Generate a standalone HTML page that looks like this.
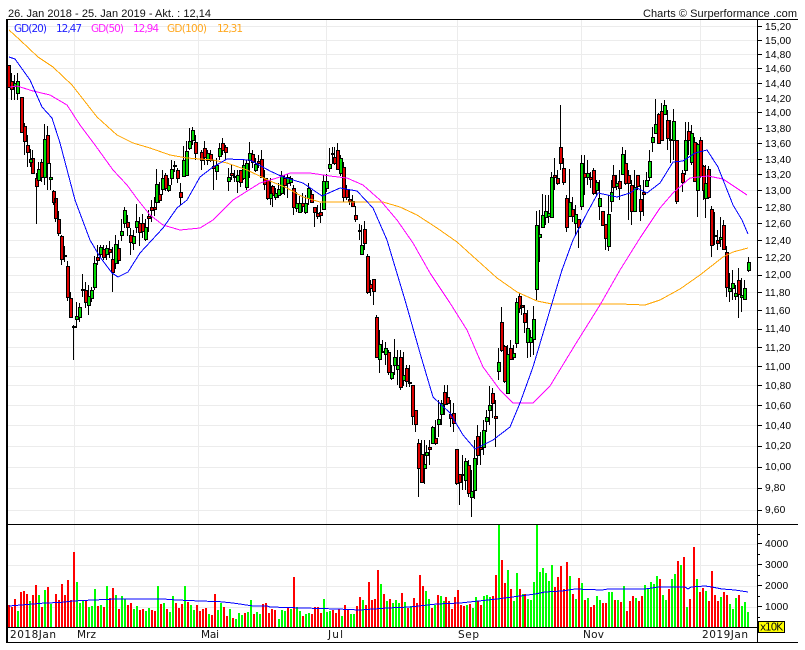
<!DOCTYPE html>
<html><head><meta charset="utf-8"><style>
html,body{margin:0;padding:0;background:#fff;width:805px;height:650px;overflow:hidden}
svg{display:block}
text{font-family:"Liberation Sans",sans-serif;font-size:11px;fill:#111}
.y text{font-size:10.2px;letter-spacing:.15px;fill:#000}
.m text,text.m{font-family:"DejaVu Sans",sans-serif;font-size:10.5px}
</style></head><body>
<svg width="805" height="650" viewBox="0 0 805 650" xmlns="http://www.w3.org/2000/svg">
<rect width="805" height="650" fill="#fff"/>
<!-- grid -->
<path fill="none" stroke="#ececec" stroke-width="1" d="M8 40.5H757M8 54.5H757M8 68.5H757M8 83.5H757M8 98.5H757M8 112.5H757M8 128.5H757M8 143.5H757M8 159.5H757M8 174.5H757M8 190.5H757M8 207.5H757M8 223.5H757M8 240.5H757M8 257.5H757M8 275.5H757M8 292.5H757M8 310.5H757M8 329.5H757M8 347.5H757M8 366.5H757M8 385.5H757M8 405.5H757M8 425.5H757M8 446.5H757M8 467.5H757M8 488.5H757M8 510.5H757M8 26.5H757
M8 544.5H757M8 565.5H757M8 586.5H757M8 607.5H757
M74.5 20V627M198.5 20V627M326.5 20V627M457.5 20V627M581.5 20V627M700.5 20V627"/>
<!-- wicks -->
<path fill="none" stroke="#000" stroke-width="1" d="M8.5 65V88M11.5 73V100M14.5 75V100M17.5 73V100M21.5 97V132M24.5 123V155M27.5 135V167M30.5 149V167M32.5 150V174M36.5 173V224M38.5 162V182M41.5 159V182M44.5 124V185M47.5 126V190M50.5 163V190M53.5 190V205M55.5 198V222M58.5 211V236M61.5 235V265M64.5 246V262M67.5 261V301M70.5 292V318M73.5 325V360M76.5 302V328M79.5 303V322M82.5 274V297M85.5 282V308M88.5 285V315M91.5 287V302M94.5 256V290M97.5 245V265M100.5 245V258M103.5 245V260M106.5 245V260M109.5 241V258M112.5 247V292M115.5 235V269M118.5 240V264M121.5 219V241M124.5 207V228M127.5 215V236M130.5 228V255M133.5 230V250M136.5 204V233M139.5 217V246M142.5 214V238M145.5 219V241M148.5 210V232M151.5 200V222M154.5 197V216M156.5 169V207M159.5 182V203M162.5 170V195M165.5 173V191M168.5 178V192M171.5 160V185M174.5 161V172M177.5 168V183M180.5 183V205M183.5 146V176M186.5 141V175M189.5 128V150M192.5 127V145M195.5 135V160M201.5 150V170M204.5 141V165M207.5 150V165M210.5 150V162M213.5 160V190M216.5 158V180M219.5 143V160M222.5 138V155M225.5 145V160M228.5 168V191M231.5 165V180M234.5 170V182M237.5 170V193M240.5 170V187M243.5 160V180M246.5 160V190M249.5 142V178M252.5 150V168M255.5 158V172M258.5 155V168M261.5 150V178M264.5 170V190M267.5 178V200M270.5 178V205M272.5 185V207M275.5 188V200M278.5 183V198M281.5 171V195M284.5 175V195M287.5 174V198M290.5 176V186M293.5 185V215M296.5 192V212M299.5 196V213M302.5 193V212M305.5 195V214M308.5 183V205M311.5 190V203M314.5 207V227M317.5 205V219M320.5 203V223M323.5 175V209M326.5 174V192M329.5 148V172M332.5 147V164M334.5 147V165M337.5 143V169M340.5 155V176M343.5 162V202M346.5 185V200M349.5 190V205M352.5 195V207M355.5 206V222M359.5 224V240M361.5 225V254M364.5 221V250M367.5 254V294M370.5 280V296M373.5 279V305M376.5 315V358M379.5 330V373M382.5 340V353M385.5 342V365M388.5 350V375M391.5 365V380M394.5 339V375M397.5 350V385M400.5 350V390M403.5 352V386M406.5 365V387M409.5 365V387M412.5 385V425M415.5 410V432M418.5 439V497M421.5 440V482M424.5 440V484M426.5 445V464M429.5 440V465M432.5 426V444M435.5 420V445M438.5 400V437M441.5 400V425M444.5 385V415M447.5 385V405M450.5 400V427M453.5 403V432M456.5 449V485M459.5 475V505M462.5 455V490M465.5 458V490M468.5 460V497M471.5 470V517M474.5 440V499M477.5 425V465M480.5 432V465M483.5 420V455M486.5 410V432M489.5 386V425M492.5 388V418M495.5 400V447M498.5 348V380M501.5 307V352M504.5 345V383M507.5 345V393M510.5 340V360M513.5 345V360M516.5 298V348M519.5 293V313M521.5 300V315M524.5 305V333M527.5 310V358M530.5 330V357M533.5 306V355M536.5 211V300M539.5 210V262M542.5 194V227M545.5 195V225M548.5 195V223M551.5 172V217M554.5 158V190M557.5 170V185M560.5 105V170M563.5 158V185M566.5 195V232M569.5 169V217M572.5 197V222M575.5 205V235M578.5 220V248M581.5 155V210M584.5 155V195M587.5 160V185M590.5 172V188M593.5 168V195M596.5 180V195M599.5 180V220M602.5 211V225M605.5 224V250M608.5 195V251M611.5 180V212M613.5 165V195M616.5 175V190M619.5 170V200M622.5 147V175M625.5 150V185M628.5 170V220M631.5 180V225M634.5 170V212M637.5 175V190M640.5 185V221M643.5 180V216M646.5 172V187M649.5 150V181M652.5 127V152M655.5 99V133M658.5 113V143M661.5 103V140M664.5 100V114M667.5 110V150M670.5 120V163M673.5 109V160M676.5 140V204M682.5 170V192M685.5 122V175M688.5 122V155M691.5 125V165M694.5 137V182M697.5 143V217M700.5 137V178M703.5 165V200M705.5 165V218M708.5 166V199M711.5 206V257M714.5 212V245M717.5 230V250M720.5 217V247M723.5 220V250M726.5 246V297M729.5 273V302M732.5 270V300M735.5 285V300M738.5 268V318M741.5 278V312M744.5 280V300M748.5 257V272"/>
<!-- red bodies -->
<path fill="#dd0000" stroke="#000" stroke-width="1" d="M7.5 65.5h3V87.5h-3zM10.5 81.5h3V89.5h-3zM20.5 97.5h3V132.5h-3zM23.5 126.5h3V141.5h-3zM26.5 145.5h3V152.5h-3zM31.5 158.5h3V173.5h-3zM35.5 178.5h3V186.5h-3zM40.5 162.5h3V177.5h-3zM46.5 135.5h3V163.5h-3zM52.5 191.5h3V202.5h-3zM54.5 198.5h3V218.5h-3zM57.5 219.5h3V233.5h-3zM60.5 236.5h3V259.5h-3zM63.5 255.5h3V256.5h-3zM66.5 266.5h3V297.5h-3zM69.5 298.5h3V317.5h-3zM72.5 326.5h3V327.5h-3zM81.5 289.5h3V290.5h-3zM84.5 290.5h3V302.5h-3zM96.5 257.5h3V260.5h-3zM102.5 249.5h3V257.5h-3zM108.5 249.5h3V252.5h-3zM111.5 259.5h3V272.5h-3zM117.5 248.5h3V260.5h-3zM126.5 222.5h3V227.5h-3zM129.5 235.5h3V242.5h-3zM138.5 223.5h3V232.5h-3zM141.5 223.5h3V231.5h-3zM147.5 216.5h3V218.5h-3zM150.5 207.5h3V210.5h-3zM153.5 207.5h3V209.5h-3zM158.5 194.5h3V200.5h-3zM164.5 175.5h3V188.5h-3zM173.5 165.5h3V166.5h-3zM176.5 170.5h3V178.5h-3zM179.5 192.5h3V197.5h-3zM194.5 142.5h3V153.5h-3zM200.5 152.5h3V160.5h-3zM203.5 148.5h3V157.5h-3zM209.5 154.5h3V160.5h-3zM212.5 166.5h3V168.5h-3zM221.5 143.5h3V150.5h-3zM224.5 147.5h3V152.5h-3zM230.5 173.5h3V175.5h-3zM233.5 176.5h3V177.5h-3zM239.5 170.5h3V182.5h-3zM251.5 154.5h3V162.5h-3zM257.5 161.5h3V163.5h-3zM260.5 159.5h3V177.5h-3zM263.5 178.5h3V184.5h-3zM266.5 180.5h3V198.5h-3zM271.5 186.5h3V195.5h-3zM283.5 178.5h3V185.5h-3zM292.5 188.5h3V207.5h-3zM301.5 203.5h3V206.5h-3zM310.5 194.5h3V202.5h-3zM313.5 207.5h3V212.5h-3zM316.5 213.5h3V216.5h-3zM319.5 212.5h3V215.5h-3zM331.5 153.5h3V154.5h-3zM333.5 157.5h3V163.5h-3zM336.5 150.5h3V169.5h-3zM342.5 167.5h3V197.5h-3zM345.5 189.5h3V197.5h-3zM348.5 199.5h3V201.5h-3zM351.5 201.5h3V206.5h-3zM354.5 215.5h3V219.5h-3zM358.5 230.5h3V231.5h-3zM363.5 229.5h3V243.5h-3zM366.5 256.5h3V292.5h-3zM369.5 284.5h3V288.5h-3zM372.5 279.5h3V291.5h-3zM375.5 317.5h3V357.5h-3zM381.5 351.5h3V352.5h-3zM387.5 352.5h3V372.5h-3zM399.5 357.5h3V387.5h-3zM405.5 368.5h3V381.5h-3zM408.5 382.5h3V383.5h-3zM411.5 385.5h3V416.5h-3zM414.5 410.5h3V424.5h-3zM417.5 443.5h3V468.5h-3zM420.5 454.5h3V482.5h-3zM428.5 447.5h3V449.5h-3zM434.5 438.5h3V443.5h-3zM443.5 392.5h3V404.5h-3zM446.5 397.5h3V403.5h-3zM449.5 414.5h3V418.5h-3zM452.5 413.5h3V423.5h-3zM455.5 449.5h3V483.5h-3zM458.5 474.5h3V482.5h-3zM461.5 474.5h3V475.5h-3zM467.5 465.5h3V493.5h-3zM476.5 436.5h3V455.5h-3zM479.5 447.5h3V449.5h-3zM491.5 393.5h3V403.5h-3zM494.5 416.5h3V418.5h-3zM500.5 322.5h3V350.5h-3zM503.5 346.5h3V381.5h-3zM509.5 348.5h3V359.5h-3zM518.5 296.5h3V308.5h-3zM520.5 305.5h3V307.5h-3zM523.5 313.5h3V322.5h-3zM553.5 175.5h3V177.5h-3zM556.5 178.5h3V183.5h-3zM559.5 147.5h3V163.5h-3zM562.5 168.5h3V182.5h-3zM565.5 198.5h3V227.5h-3zM571.5 209.5h3V216.5h-3zM577.5 219.5h3V227.5h-3zM583.5 173.5h3V177.5h-3zM589.5 177.5h3V179.5h-3zM592.5 170.5h3V193.5h-3zM601.5 211.5h3V225.5h-3zM604.5 224.5h3V238.5h-3zM612.5 175.5h3V187.5h-3zM618.5 181.5h3V188.5h-3zM624.5 163.5h3V183.5h-3zM627.5 175.5h3V183.5h-3zM630.5 185.5h3V211.5h-3zM636.5 175.5h3V186.5h-3zM639.5 199.5h3V211.5h-3zM642.5 192.5h3V194.5h-3zM657.5 114.5h3V143.5h-3zM660.5 111.5h3V140.5h-3zM666.5 120.5h3V138.5h-3zM669.5 139.5h3V140.5h-3zM675.5 140.5h3V201.5h-3zM681.5 173.5h3V182.5h-3zM687.5 131.5h3V140.5h-3zM693.5 142.5h3V181.5h-3zM699.5 140.5h3V176.5h-3zM702.5 166.5h3V190.5h-3zM707.5 169.5h3V197.5h-3zM710.5 209.5h3V245.5h-3zM713.5 235.5h3V236.5h-3zM716.5 240.5h3V243.5h-3zM722.5 225.5h3V249.5h-3zM725.5 252.5h3V287.5h-3zM737.5 280.5h3V294.5h-3z"/>
<!-- green bodies -->
<path fill="#00d800" stroke="#000" stroke-width="1" d="M13.5 83.5h3V86.5h-3zM16.5 81.5h3V93.5h-3zM29.5 159.5h3V162.5h-3zM37.5 169.5h3V180.5h-3zM43.5 139.5h3V177.5h-3zM49.5 177.5h3V179.5h-3zM75.5 316.5h3V319.5h-3zM78.5 307.5h3V317.5h-3zM87.5 296.5h3V305.5h-3zM90.5 290.5h3V298.5h-3zM93.5 263.5h3V287.5h-3zM99.5 247.5h3V254.5h-3zM105.5 248.5h3V254.5h-3zM114.5 244.5h3V263.5h-3zM120.5 231.5h3V235.5h-3zM123.5 210.5h3V223.5h-3zM132.5 236.5h3V243.5h-3zM135.5 221.5h3V227.5h-3zM144.5 227.5h3V239.5h-3zM155.5 184.5h3V202.5h-3zM161.5 178.5h3V189.5h-3zM167.5 185.5h3V190.5h-3zM170.5 169.5h3V178.5h-3zM182.5 160.5h3V176.5h-3zM185.5 151.5h3V175.5h-3zM188.5 141.5h3V148.5h-3zM191.5 130.5h3V140.5h-3zM206.5 153.5h3V160.5h-3zM215.5 165.5h3V171.5h-3zM218.5 148.5h3V156.5h-3zM227.5 177.5h3V181.5h-3zM236.5 175.5h3V181.5h-3zM242.5 165.5h3V178.5h-3zM245.5 163.5h3V187.5h-3zM248.5 153.5h3V160.5h-3zM254.5 164.5h3V170.5h-3zM269.5 193.5h3V198.5h-3zM274.5 193.5h3V197.5h-3zM277.5 189.5h3V195.5h-3zM280.5 175.5h3V193.5h-3zM286.5 177.5h3V183.5h-3zM289.5 178.5h3V182.5h-3zM295.5 203.5h3V208.5h-3zM298.5 203.5h3V212.5h-3zM304.5 203.5h3V212.5h-3zM307.5 188.5h3V198.5h-3zM322.5 181.5h3V209.5h-3zM325.5 181.5h3V188.5h-3zM328.5 164.5h3V168.5h-3zM339.5 158.5h3V173.5h-3zM360.5 245.5h3V254.5h-3zM378.5 344.5h3V359.5h-3zM384.5 348.5h3V354.5h-3zM390.5 372.5h3V378.5h-3zM393.5 357.5h3V365.5h-3zM396.5 365.5h3V369.5h-3zM402.5 375.5h3V380.5h-3zM423.5 464.5h3V468.5h-3zM425.5 452.5h3V455.5h-3zM431.5 427.5h3V443.5h-3zM437.5 419.5h3V424.5h-3zM440.5 403.5h3V414.5h-3zM464.5 461.5h3V480.5h-3zM470.5 491.5h3V497.5h-3zM473.5 458.5h3V490.5h-3zM482.5 430.5h3V447.5h-3zM485.5 417.5h3V421.5h-3zM488.5 405.5h3V410.5h-3zM497.5 362.5h3V371.5h-3zM506.5 354.5h3V393.5h-3zM512.5 353.5h3V357.5h-3zM515.5 302.5h3V343.5h-3zM526.5 328.5h3V342.5h-3zM529.5 337.5h3V342.5h-3zM532.5 319.5h3V339.5h-3zM535.5 225.5h3V289.5h-3zM538.5 234.5h3V237.5h-3zM541.5 215.5h3V227.5h-3zM544.5 211.5h3V217.5h-3zM547.5 213.5h3V216.5h-3zM550.5 177.5h3V217.5h-3zM568.5 202.5h3V216.5h-3zM574.5 214.5h3V223.5h-3zM580.5 163.5h3V206.5h-3zM586.5 173.5h3V177.5h-3zM595.5 182.5h3V190.5h-3zM598.5 198.5h3V206.5h-3zM607.5 214.5h3V246.5h-3zM610.5 192.5h3V201.5h-3zM615.5 183.5h3V186.5h-3zM621.5 154.5h3V174.5h-3zM633.5 187.5h3V211.5h-3zM645.5 180.5h3V186.5h-3zM648.5 161.5h3V177.5h-3zM651.5 137.5h3V142.5h-3zM654.5 124.5h3V133.5h-3zM663.5 105.5h3V114.5h-3zM672.5 121.5h3V140.5h-3zM684.5 140.5h3V170.5h-3zM690.5 133.5h3V162.5h-3zM696.5 144.5h3V190.5h-3zM704.5 183.5h3V198.5h-3zM719.5 237.5h3V239.5h-3zM728.5 288.5h3V291.5h-3zM731.5 283.5h3V288.5h-3zM734.5 293.5h3V296.5h-3zM740.5 295.5h3V297.5h-3zM743.5 288.5h3V299.5h-3zM747.5 262.5h3V270.5h-3z"/>
<!-- moving averages -->
<polyline shape-rendering="crispEdges" fill="none" stroke="#ffa500" stroke-width="1" points="9,30 20,40 38,57 53,67 72,85 97,117 117,135 133,143 150,148 170,155 187,158 213,160 227,163 247,170 270,181 287,188 303,197 320,202 343,202 363,202 383,202 400,207 417,215 437,228 457,242 477,260 497,278 517,292 537,301 552,304 580,304 620,304 645,305 660,300 680,289 700,275 723,257 733,252 748,248"/>
<polyline shape-rendering="crispEdges" fill="none" stroke="#ff00ff" stroke-width="1" points="10,87 17,86 33,91 50,95 67,105 80,125 95,145 113,170 127,185 138,200 150,215 163,225 180,230 200,228 213,220 233,200 260,183 277,178 290,173 310,173 330,176 347,178 363,185 380,200 397,220 413,243 430,273 450,303 467,330 483,367 500,390 513,403 533,403 550,386 575,345 600,305 620,270 640,238 660,208 673,193 690,178 708,176 723,179 747,195"/>
<polyline shape-rendering="crispEdges" fill="none" stroke="#0000ff" stroke-width="1" points="9,57 15,59 30,80 42,107 52,118 60,143 75,200 90,240 100,257 112,273 118,277 128,272 140,253 163,228 177,208 187,200 200,177 213,167 227,159 250,160 270,171 283,177 303,183 322,196 340,188 357,191 373,208 387,240 405,300 420,353 433,397 450,413 463,435 475,449 493,440 510,427 520,403 533,367 550,310 562,270 573,240 587,213 598,193 617,197 630,193 637,188 647,193 660,183 673,162 683,161 695,153 707,150 718,167 733,205 742,220 748,234"/>
<!-- volume -->
<path fill="none" stroke="#ff0000" stroke-width="2" d="M9 627V605M12 627V607M15 627V599M21 627V592M24 627V591M27 627V594M33 627V595M36 627V585M42 627V607M48 627V587M56 627V594M59 627V600M62 627V584M65 627V595M68 627V580M71 627V600M74 627V552M86 627V601M98 627V606M104 627V607M110 627V598M113 627V588M119 627V609M128 627V605M131 627V603M140 627V610M143 627V609M152 627V610M155 627V611M161 627V604M167 627V609M176 627V603M179 627V608M182 627V604M188 627V602M197 627V605M200 627V611M203 627V609M206 627V608M212 627V615M215 627V594M224 627V607M227 627V616M233 627V618M245 627V613M254 627V614M263 627V604M266 627V603M269 627V613M272 627V609M275 627V610M288 627V607M294 627V577M303 627V616M312 627V614M315 627V607M318 627V607M321 627V613M333 627V610M336 627V613M339 627V609M345 627V605M348 627V609M357 627V606M360 627V597M366 627V605M369 627V582M372 627V600M375 627V599M378 627V570M384 627V594M390 627V599M402 627V593M408 627V608M414 627V598M417 627V603M420 627V575M423 627V586M432 627V608M438 627V595M446 627V597M449 627V601M452 627V609M455 627V597M458 627V590M461 627V605M464 627V606M470 627V604M478 627V601M481 627V605M493 627V596M496 627V575M502 627V560M505 627V583M511 627V589M520 627V589M525 627V594M555 627V587M558 627V577M561 627V566M564 627V589M567 627V562M573 627V594M579 627V578M585 627V600M591 627V607M594 627V605M603 627V603M606 627V603M615 627V600M621 627V602M627 627V611M630 627V601M633 627V596M639 627V601M642 627V596M660 627V579M669 627V589M678 627V561M684 627V557M690 627V599M694 627V547M700 627V592M703 627V588M709 627V601M712 627V571M715 627V595M718 627V601M724 627V592M727 627V595M739 627V595"/>
<path fill="none" stroke="#00ff00" stroke-width="2" d="M18 627V611M30 627V601M39 627V595M45 627V590M51 627V604M77 627V582M80 627V603M83 627V600M89 627V607M92 627V606M95 627V589M101 627V605M107 627V586M116 627V595M122 627V596M125 627V599M134 627V609M137 627V606M146 627V611M149 627V608M158 627V586M164 627V603M170 627V612M173 627V596M185 627V586M191 627V605M194 627V610M209 627V614M218 627V610M221 627V603M230 627V609M236 627V619M239 627V613M242 627V615M248 627V612M251 627V600M257 627V612M260 627V614M279 627V619M282 627V610M285 627V611M291 627V609M297 627V607M300 627V611M306 627V614M309 627V613M324 627V599M327 627V612M330 627V611M342 627V616M351 627V614M354 627V614M363 627V600M381 627V584M387 627V601M393 627V603M396 627V600M399 627V603M405 627V602M411 627V606M426 627V591M429 627V599M435 627V605M441 627V596M444 627V601M467 627V605M473 627V608M476 627V597M484 627V596M487 627V595M490 627V597M499 627V524M508 627V570M514 627V601M517 627V573M523 627V594M528 627V599M531 627V600M534 627V582M537 627V524M540 627V572M543 627V568M546 627V573M549 627V581M552 627V565M570 627V576M576 627V599M582 627V583M588 627V598M597 627V596M600 627V600M609 627V592M612 627V592M618 627V600M624 627V586M636 627V598M645 627V585M648 627V589M651 627V582M654 627V584M657 627V576M663 627V595M666 627V600M672 627V579M675 627V574M681 627V565M687 627V607M697 627V579M706 627V591M721 627V597M730 627V604M733 627V609M736 627V598M742 627V606M745 627V602M748 627V612"/>
<polyline shape-rendering="crispEdges" fill="none" stroke="#0000ff" stroke-width="1" points="9,606 33,604 45,603 60,602.5 73,601 93,600 117,599 163,599 177,600 200,601 220,601.7 233,603 253,606 267,606 270,607 303,608 337,609 360,610 387,608 410,607 437,604 460,603 497,599 520,596 535,594 545,592 562,591 575,589 602,590 608,589 645,589 658,587 685,587 688,589 691,587 705,586 712,587 722,589 735,590 748,592"/>
<!-- frame -->
<path fill="none" stroke="#000" stroke-width="1" d="M6 19.5H798M6 524.5H798M6 642.5H798M7 627.5H757"/>
<path fill="none" stroke="#000" stroke-width="2" d="M7 19V643"/>
<path fill="none" stroke="#000" stroke-width="1" d="M757.5 19V643
M757 26.5h5M757 40.5h5M757 54.5h5M757 68.5h5M757 83.5h5M757 98.5h5M757 112.5h5M757 128.5h5M757 143.5h5M757 159.5h5M757 174.5h5M757 190.5h5M757 207.5h5M757 223.5h5M757 240.5h5M757 257.5h5M757 275.5h5M757 292.5h5M757 310.5h5M757 329.5h5M757 347.5h5M757 366.5h5M757 385.5h5M757 405.5h5M757 425.5h5M757 446.5h5M757 467.5h5M757 488.5h5M757 510.5h5
M757 543.5h5M757 564.5h5M757 585.5h5M757 606.5h5M757 534.5h3M757 554.5h3M757 575.5h3M757 596.5h3M757 617.5h3"/>
<!-- title text -->
<text x="8" y="17" textLength="203" lengthAdjust="spacing">26. Jan 2018 - 25. Jan 2019 - Akt. : 12,14</text>
<text x="643" y="17" textLength="154" lengthAdjust="spacing">Charts © Surperformance .com</text>
<g class="m">
<text x="14" y="32" textLength="33" style="fill:#2222ff">GD(20)</text>
<text x="56" y="32" textLength="26" style="fill:#2222ff">12,47</text>
<text x="91" y="32" textLength="33" style="fill:#ff22ff">GD(50)</text>
<text x="133" y="32" textLength="26" style="fill:#ff22ff">12,94</text>
<text x="167" y="32" textLength="40" style="fill:#ffa820">GD(100)</text>
<text x="217" y="32" textLength="26" style="fill:#ffa820">12,31</text>
</g>
<!-- y labels -->
<g class="y">
<text x="765" y="30">15,20</text><text x="765" y="44">15,00</text><text x="765" y="58">14,80</text><text x="765" y="72">14,60</text><text x="765" y="87">14,40</text><text x="765" y="102">14,20</text><text x="765" y="116">14,00</text><text x="765" y="132">13,80</text><text x="765" y="147">13,60</text><text x="765" y="163">13,40</text><text x="765" y="178">13,20</text><text x="765" y="194">13,00</text><text x="765" y="211">12,80</text><text x="765" y="227">12,60</text><text x="765" y="244">12,40</text><text x="765" y="261">12,20</text><text x="765" y="278">12,00</text><text x="765" y="296">11,80</text><text x="765" y="314">11,60</text><text x="765" y="332">11,40</text><text x="765" y="351">11,20</text><text x="765" y="370">11,00</text><text x="765" y="389">10,80</text><text x="765" y="409">10,60</text><text x="765" y="429">10,40</text><text x="765" y="449">10,20</text><text x="765" y="470">10,00</text><text x="765" y="491">9,80</text><text x="765" y="513">9,60</text>
<text x="765" y="547">4000</text><text x="765" y="568">3000</text><text x="765" y="589">2000</text><text x="765" y="610">1000</text>
</g>
<!-- x labels -->
<g class="m">
<text x="10" y="638" textLength="46">2018Jan</text>
<text x="77" y="638" textLength="19">Mrz</text>
<text x="201" y="638" textLength="18">Mai</text>
<text x="328" y="638" textLength="15">Jul</text>
<text x="458" y="638" textLength="21">Sep</text>
<text x="583" y="638" textLength="21">Nov</text>
<text x="702" y="638" textLength="46">2019Jan</text>
</g>
<rect x="758.5" y="621.5" width="26" height="11" fill="#ffff00" stroke="#000"/>
<text class="m" x="760" y="630.5" textLength="23">x10K</text>
</svg>
</body></html>
